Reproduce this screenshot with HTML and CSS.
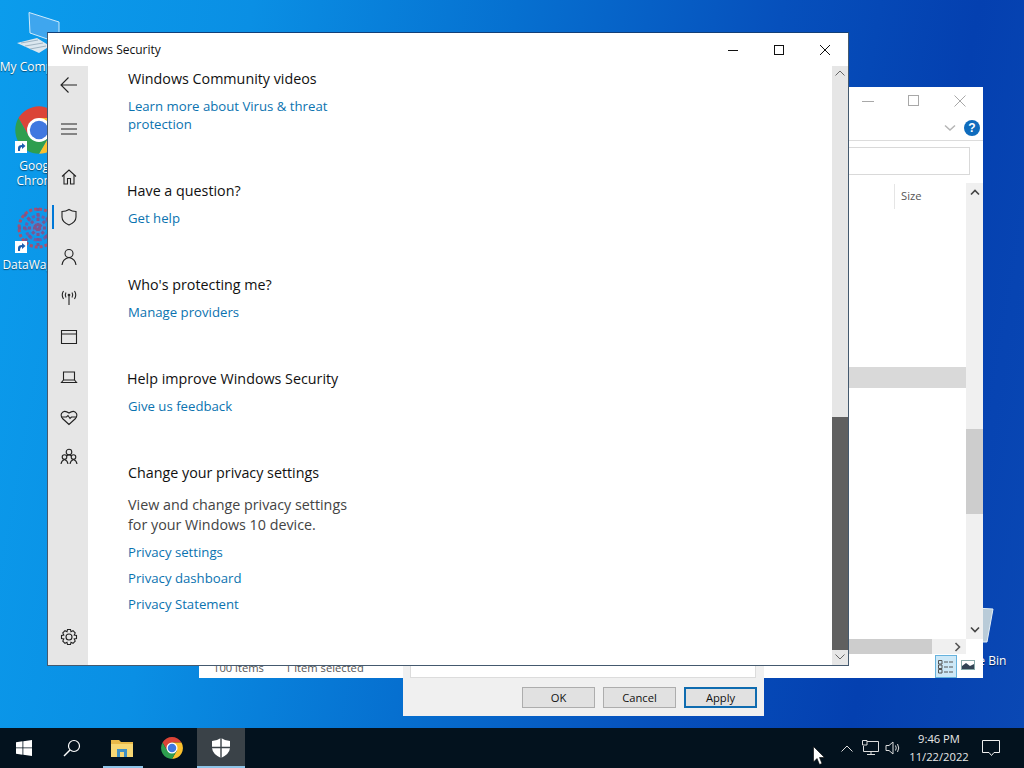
FILE: index.html
```html
<!DOCTYPE html>
<html>
<head>
  <title>Windows Security</title>
  <link rel="stylesheet" href="styles.css">
</head>
<body>
  <svg class="defs" width="0" height="0">
    <symbol id="chrome" viewBox="0 0 48 48">
      <path fill="#db4437" d="M5.05 13A22 22 0 0 1 42.95 13H24L14.5 29.5Z"/>
      <path fill="#fbc02d" d="M42.95 13A22 22 0 0 1 24 46L33.5 29.5 24 13Z"/>
      <path fill="#2e9e4f" d="M24 46A22 22 0 0 1 5.05 13L14.5 29.5H33.5Z"/>
      <circle cx="24" cy="24" r="11" fill="#fff"/>
      <circle cx="24" cy="24" r="8.5" fill="#3f78e0"/>
    </symbol>
    <symbol id="shortcut" viewBox="0 0 12 12">
      <rect width="12" height="12" fill="#fff"/>
      <path d="M3 10V7Q3 4 7 4V2L10.500 5 7 8V6Q5 6 5 10Z" fill="#1b5fb0"/>
    </symbol>
  </svg>

  <div class="desktop">
    <div class="desk-icon icon-pc">
      <svg class="desk-art" width="48" height="42" viewBox="0 0 48 42">
        <path d="M15 .5L45 10V31L16 21Z" fill="#3fa6ee" stroke="#cfeafb"/>
        <path d="M3 31L23 26 36 34 25 41Z" fill="#dbe7ef"/>
        <path d="M7 31L24 28M11 34L29 31M16 37L32 34" stroke="#9fb4c2"/>
      </svg>
      <span>My Computer</span>
    </div>
    <div class="desk-icon icon-chrome">
      <svg class="desk-art" width="52" height="52"><use href="#chrome"/></svg>
      <svg class="badge" width="12" height="12"><use href="#shortcut"/></svg>
      <span>Google Chrome</span>
    </div>
    <div class="desk-icon icon-data">
      <svg class="desk-art" width="48" height="46" viewBox="0 0 48 46">
        <circle cx="24" cy="23" r="8" fill="#2f8fe0"/>
        <g fill="none" stroke="#a8506e" stroke-width="3" stroke-dasharray="3 2">
          <circle cx="24" cy="23" r="19"/>
          <circle cx="24" cy="23" r="12" stroke="#6a5fa8"/>
          <path d="M4 23H44M24 3V43M10 9L38 37M38 9L10 37" stroke="#7b5590"/>
        </g>
      </svg>
      <svg class="badge" width="12" height="12"><use href="#shortcut"/></svg>
      <span>DataWagon</span>
    </div>
    <div class="desk-icon icon-bin">
      <svg class="desk-art" width="48" height="40" viewBox="0 0 48 40">
        <path d="M6 2L42 4 36 37H14Z" fill="#b9cbd8" stroke="#e6f0f6"/>
      </svg>
      <span>Recycle Bin</span>
    </div>

    <!-- explorer behind everything -->
    <div class="explorer">
      <div class="exp-title">
        <svg width="12" height="12" viewBox="0 0 12 12"><path d="M0 6.500H12" stroke="#a8a8a8"/></svg>
        <svg width="12" height="12" viewBox="0 0 12 12"><rect x=".5" y=".5" width="10" height="10" fill="none" stroke="#a8a8a8"/></svg>
        <svg width="12" height="12" viewBox="0 0 12 12"><path d="M.5 .5L11.500 11.500M11.500 .5L.5 11.500" stroke="#a8a8a8"/></svg>
      </div>
      <div class="exp-ribbon">
        <svg width="12" height="8" viewBox="0 0 12 8"><path d="M1 1.500L6 6 11 1.500" fill="none" stroke="#b5b5b5" stroke-width="1.500"/></svg>
        <span class="help">?</span>
      </div>
      <div class="exp-address"><div class="address-box"></div></div>
      <div class="exp-body">
        <div class="exp-list">
          <div class="col-head"><span class="col-size">Size</span></div>
          <div class="row-selected"></div>
        </div>
        <div class="exp-vscroll">
          <svg width="10" height="7" viewBox="0 0 10 7"><path d="M1 5.500L5 1.500 9 5.500" fill="none" stroke="#444" stroke-width="1.600"/></svg>
          <div class="exp-vthumb"></div>
          <svg width="10" height="7" viewBox="0 0 10 7"><path d="M1 1.500L5 5.500 9 1.500" fill="none" stroke="#444" stroke-width="1.600"/></svg>
        </div>
      </div>
      <div class="exp-hscroll">
        <div class="exp-hthumb"></div>
        <svg width="7" height="10" viewBox="0 0 7 10"><path d="M1.500 1L5.500 5 1.500 9" fill="none" stroke="#555" stroke-width="1.600"/></svg>
      </div>
      <div class="exp-status">
        <span class="status-text">100 items</span>
        <span class="status-text">1 item selected</span>
        <span class="view-btn">
          <svg width="16" height="14" viewBox="0 0 16 14"><path d="M.5 .5H4V4H.5ZM.5 5H4V8.500H.5ZM.5 9.500H4V13H.5ZM6 2H10M11 2H15M6 7H10M11 7H15M6 12H10M11 12H15" fill="none" stroke="#555"/></svg>
        </span>
        <span class="view-large">
          <svg width="14" height="10" viewBox="0 0 14 10"><rect x=".5" y=".5" width="13" height="9" fill="#fff" stroke="#8aa"/><path d="M1 6L5 3 9 6 13 4V9H1Z" fill="#345"/></svg>
        </span>
      </div>
    </div>

    <div class="dialog">
      <div class="dialog-box"></div>
      <div class="dialog-buttons">
        <button class="btn">OK</button>
        <button class="btn">Cancel</button>
        <button class="btn btn-default">Apply</button>
      </div>
    </div>

    <!-- Windows Security -->
    <div class="security">
      <div class="sec-title">
        <span class="sec-name">Windows Security</span>
        <div class="sec-controls">
          <svg width="12" height="12" viewBox="0 0 12 12"><path d="M1 6.500H11" stroke="#111"/></svg>
          <svg width="12" height="12" viewBox="0 0 12 12"><rect x="1.500" y="1.500" width="9" height="9" fill="none" stroke="#111"/></svg>
          <svg width="12" height="12" viewBox="0 0 12 12"><path d="M1 1L11 11M11 1L1 11" stroke="#111"/></svg>
        </div>
      </div>
      <div class="sec-main">
        <nav class="sidebar">
          <div class="nav-top nav-back">
            <svg width="20" height="20" viewBox="0 0 20 20"><path d="M18 10H2M9.500 2.500L2 10l7.500 7.500" class="ic"/></svg>
          </div>
          <div class="nav-top nav-menu">
            <svg width="18" height="14" viewBox="0 0 18 14"><path d="M1 2H17M1 7H17M1 12H17" class="ic"/></svg>
          </div>
          <div class="nav-item">
            <svg width="18" height="18" viewBox="0 0 18 18"><path d="M2 8.500L9 2l7 6.500M4 7V16H7.500V10.500H10.500V16H14V7" class="ic"/></svg>
          </div>
          <div class="nav-item nav-active">
            <svg width="18" height="18" viewBox="0 0 18 18"><path d="M9 1.500Q12 3.500 16 3.500V9Q16 14 9 17 2 14 2 9V3.500Q6 3.500 9 1.500Z" class="ic"/></svg>
          </div>
          <div class="nav-item">
            <svg width="18" height="18" viewBox="0 0 18 18"><circle cx="9" cy="5.500" r="4" class="ic"/><path d="M2 17Q2.500 11 9 9.500 15.500 11 16 17" class="ic"/></svg>
          </div>
          <div class="nav-item">
            <svg width="18" height="18" viewBox="0 0 18 18"><path d="M9 8V17M6 4.500Q4.500 7 6 9.500M12 4.500Q13.500 7 12 9.500M3.500 3Q1 7 3.500 11M14.500 3Q17 7 14.500 11" class="ic"/><circle cx="9" cy="7" r=".8" class="ic"/></svg>
          </div>
          <div class="nav-item">
            <svg width="18" height="18" viewBox="0 0 18 18"><path d="M1.500 2.500H16.500V15.500H1.500ZM1.500 6H16.500" class="ic"/></svg>
          </div>
          <div class="nav-item">
            <svg width="18" height="18" viewBox="0 0 18 18"><path d="M3.500 4H14.500V12H3.500ZM1.500 14.500H16.500L14.500 12H3.500Z" class="ic"/></svg>
          </div>
          <div class="nav-item">
            <svg width="18" height="18" viewBox="0 0 18 18"><path d="M9 16.500L2.500 10.500Q.5 8 1.500 5.500 4 1.500 9 5 14 1.500 16.500 5.500 17.500 8 15.500 10.500Z" class="ic"/><path d="M1.500 9H6.500L8 7.500 10 10.500 11.500 9H16.500" class="ic"/></svg>
          </div>
          <div class="nav-item">
            <svg width="18" height="18" viewBox="0 0 18 18"><circle cx="9" cy="4" r="2.800" class="ic"/><circle cx="4.500" cy="9" r="2.300" class="ic"/><circle cx="13.500" cy="9" r="2.300" class="ic"/><path d="M1 16Q1.500 12.500 4.500 11.500 7.500 12.500 8 16M10 16Q10.500 12.500 13.500 11.500 16.500 12.500 17 16M6.500 8Q9 6 11.500 8" class="ic"/></svg>
          </div>
          <div class="nav-item nav-settings">
            <svg width="18" height="18" viewBox="0 0 18 18"><circle cx="9" cy="9" r="3" class="ic"/><path d="M7.500 1.500H10.500L11 3.700 13 2.700 15.200 4.900 14.200 7 16.500 7.500V10.500L14.200 11 15.200 13.100 13 15.300 11 14.300 10.500 16.500H7.500L7 14.300 5 15.300 2.800 13.100 3.800 11 1.500 10.500V7.500L3.800 7 2.800 4.900 5 2.700 7 3.700Z" class="ic"/></svg>
          </div>
        </nav>

        <div class="content">
          <section class="block">
            <h2>Windows Community videos</h2>
            <a class="link">Learn more about Virus &amp; threat<br>protection</a>
          </section>
          <section class="block">
            <h2 class="out">Have a question?</h2>
            <a class="link">Get help</a>
          </section>
          <section class="block">
            <h2>Who's protecting me?</h2>
            <a class="link">Manage providers</a>
          </section>
          <section class="block">
            <h2 class="out">Help improve Windows Security</h2>
            <a class="link">Give us feedback</a>
          </section>
          <section class="block">
            <h2>Change your privacy settings</h2>
            <p>View and change privacy settings<br>for your Windows 10 device.</p>
            <a class="link">Privacy settings</a>
            <a class="link">Privacy dashboard</a>
            <a class="link">Privacy Statement</a>
          </section>
        </div>

        <div class="sec-scroll">
          <svg class="sec-arrow" width="10" height="6" viewBox="0 0 10 6"><path d="M.5 5.500L5 1 9.500 5.500" fill="none" stroke="#666"/></svg>
          <div class="sec-thumb"></div>
          <svg class="sec-arrow" width="10" height="6" viewBox="0 0 10 6"><path d="M.5 .5L5 5 9.500 .5" fill="none" stroke="#666"/></svg>
        </div>
      </div>
    </div>
  </div>

  <footer class="taskbar">
    <div class="task-cell">
      <svg width="16" height="16" viewBox="0 0 16 16"><path fill="#fff" d="M0 2.300L6.500 1.300V7.500H0ZM7.300 1.200L16 0V7.500H7.300ZM0 8.300H6.500V14.700L0 13.700ZM7.300 8.300H16V16L7.300 14.800Z"/></svg>
    </div>
    <div class="task-cell">
      <svg width="18" height="18" viewBox="0 0 18 18"><circle cx="11" cy="7" r="5.500" fill="none" stroke="#fff" stroke-width="1.200"/><path d="M7 11L1 17" stroke="#fff" stroke-width="1.400"/></svg>
    </div>
    <div class="task-cell task-open">
      <svg width="22" height="18" viewBox="0 0 22 18"><path d="M0 1H8L10 3H22V6H0Z" fill="#e9b949"/><path d="M0 5H22V18H0Z" fill="#f7d774"/><path d="M6 18V10H16V18H13V13H9V18Z" fill="#3f8fc4"/></svg>
    </div>
    <div class="task-cell task-chrome">
      <svg width="24" height="24"><use href="#chrome"/></svg>
    </div>
    <div class="task-cell task-active">
      <svg width="18" height="20" viewBox="0 0 18 20"><path fill="#fff" d="M9 0Q12.500 2.500 18 3V10Q17.500 16 9 20 .5 16 0 10V3Q5.500 2.500 9 0Z"/><path d="M9 0V20M0 9.500H18" stroke="#3a4248" stroke-width="1.400"/></svg>
    </div>
    <div class="tray">
      <svg class="tray-chevron" width="12" height="7" viewBox="0 0 12 7"><path d="M.5 6.500L6 1l5.500 5.500" fill="none" stroke="#ddd"/></svg>
      <svg class="tray-network" width="17" height="16" viewBox="0 0 17 16"><path d="M5 1.500H16.500V11.500H1.500V6M9 11.500V14.500M5 14.500H13M.5 .5H5V5H.5Z" fill="none" stroke="#ddd"/></svg>
      <svg class="tray-sound" width="16" height="14" viewBox="0 0 16 14"><path d="M1 4.500H4L8 1V13L4 9.500H1ZM10.500 4.500Q12 7 10.500 9.500M12.500 3Q15 7 12.500 11" fill="none" stroke="#ddd"/></svg>
      <div class="clock"><span>9:46 PM</span><span>11/22/2022</span></div>
      <svg class="notify" width="18" height="17" viewBox="0 0 18 17"><path d="M.5 .5H17.500V12.500H12L9.500 15.500 7 12.500H.5Z" fill="none" stroke="#eee"/></svg>
    </div>
  </footer>

  <svg class="cursor" width="13" height="19" viewBox="0 0 13 19"><path d="M.5 .5V16L4 12.500 6.500 18.500 9 17.500 6.500 11.500H11.500Z" fill="#fff" stroke="#000" stroke-width=".6"/></svg>
</body>
</html>
```

FILE: styles.css
```css
* {
  box-sizing: border-box;
}

html, body {
  margin: 0;
  height: 100%;
  overflow: hidden;
}

body {
  width: 1024px;
  height: 768px;
  position: relative;
  display: flex;
  flex-direction: column;
  font-family: "Open Sans", "Liberation Sans", sans-serif;
  background: #02101c;
}

.defs {
  position: absolute;
}

.desktop {
  position: relative;
  height: 728px;
  overflow: hidden;
  background:
    linear-gradient(100deg, #0b9cec 0%, #0a8fe4 22%, #0670d0 45%, #0650bc 68%, #0440b0 85%, #0a48b4 100%);
}

/* desktop icons */
.desk-icon {
  position: absolute;
  width: 76px;
  left: 0;
  display: flex;
  flex-direction: column;
  align-items: center;
  color: #fff;
  font-size: 12px;
  line-height: 15px;
  text-align: center;
  text-shadow: 0 1px 1px rgba(0, 0, 0, 0.5);
}

.icon-pc span,
.icon-data span,
.icon-bin span {
  white-space: nowrap;
}

.desk-art {
  flex: none;
}

.badge {
  position: absolute;
  left: 15px;
  bottom: 0;
}

.icon-pc {
  top: 12px;
}

.icon-pc span {
  margin-top: 5px;
}

.icon-chrome {
  top: 104px;
  left: 1px;
}

.icon-chrome .badge {
  top: 37px;
  left: 14px;
}

.icon-chrome span {
  margin-top: 2px;
  padding: 0 8px;
}

.icon-data {
  top: 205px;
  left: -3px;
}

.icon-data .desk-art {
  margin-left: 6px;
}

.icon-data .badge {
  top: 36px;
  left: 18px;
}

.icon-data span {
  margin-top: 6px;
}

.icon-bin {
  left: 937px;
  top: 605px;
}

.icon-bin span {
  margin-top: 8px;
}

/* explorer window */
.explorer {
  position: absolute;
  left: 199px;
  top: 87px;
  width: 784px;
  height: 591px;
  background: #fff;
  display: flex;
  flex-direction: column;
  color: #555;
  font-size: 11.2px;
}

.exp-title {
  height: 28px;
  display: flex;
  justify-content: flex-end;
  align-items: center;
  gap: 34px;
  padding-right: 17px;
}

.exp-ribbon {
  height: 26px;
  display: flex;
  justify-content: flex-end;
  align-items: center;
  gap: 8px;
  padding-right: 3px;
  border-bottom: 1px solid #dcdcdc;
}

.help {
  width: 16px;
  height: 16px;
  border-radius: 50%;
  background: #0f6cbd;
  color: #fff;
  font: bold 12px/16px "Liberation Sans", sans-serif;
  text-align: center;
}

.exp-address {
  height: 42px;
  padding: 6px 13px 8px 0;
}

.address-box {
  height: 28px;
  border: 1px solid #d9d9d9;
}

.exp-body {
  flex: 1;
  display: flex;
  min-height: 0;
}

.exp-list {
  flex: 1;
}

.col-head {
  height: 25px;
  margin-top: 1px;
  display: flex;
  justify-content: flex-end;
}

.col-size {
  width: 72px;
  padding-left: 6px;
  line-height: 24px;
  border-left: 1px solid #e5e5e5;
}

.row-selected {
  height: 21px;
  margin-top: 158px;
  background: #d9d9d9;
}

.exp-vscroll {
  width: 17px;
  background: #f0f0f0;
  display: flex;
  flex-direction: column;
  align-items: center;
  padding: 6px 0;
}

.exp-vthumb {
  width: 100%;
  height: 85px;
  margin-top: 233px;
  margin-bottom: auto;
  background: #cdcdcd;
}

.exp-hscroll {
  height: 15px;
  flex: none;
  margin-right: 17px;
  background: #f0f0f0;
  display: flex;
  align-items: center;
  justify-content: space-between;
  padding-right: 5px;
}

.exp-hthumb {
  width: 733px;
  height: 100%;
  background: #cdcdcd;
}

.exp-status {
  height: 24px;
  flex: none;
  display: flex;
  align-items: flex-end;
  padding-left: 14px;
}

.status-text {
  line-height: 17px;
  margin-right: 21px;
  margin-bottom: 2px;
}

.view-btn {
  margin-left: auto;
  width: 22px;
  height: 23px;
  display: flex;
  align-items: center;
  justify-content: center;
  background: #cde8f7;
  border: 1px solid #66b2dd;
}

.view-large {
  display: flex;
  margin: 0 8px 8px 4px;
}

/* dialog */
.dialog {
  position: absolute;
  left: 403px;
  top: 400px;
  width: 361px;
  height: 316px;
  background: #f0f0f0;
  padding: 0 8px 8px 7px;
  display: flex;
  flex-direction: column;
}

.dialog-box {
  height: 278px;
  background: #fff;
  border: 1px solid #dcdcdc;
}

.dialog-buttons {
  display: flex;
  justify-content: flex-end;
  gap: 8px;
  margin-top: 9px;
  margin-right: -1px;
}

.btn {
  width: 73px;
  height: 21px;
  padding: 0;
  background: #e1e1e1;
  border: 1px solid #adadad;
  color: #111;
  font-family: inherit;
  font-size: 11.2px;
}

.btn-default {
  border: 2px solid #0f6cb0;
}

/* security window */
.security {
  position: absolute;
  left: 47px;
  top: 32px;
  width: 802px;
  height: 634px;
  background: #fff;
  border: 1px solid #44596e;
  border-top-color: #123f78;
  display: flex;
  flex-direction: column;
}

.sec-title {
  height: 33px;
  flex: none;
  display: flex;
  align-items: center;
  justify-content: space-between;
  padding-left: 14px;
}

.sec-name {
  font-size: 12px;
  color: #111;
}

.sec-controls {
  display: flex;
  gap: 34px;
  padding-right: 17px;
}

.sec-main {
  flex: 1;
  display: flex;
  min-height: 0;
}

.sidebar {
  width: 40px;
  flex: none;
  padding-left: 1px;
  background: #e6e6e6;
  display: flex;
  flex-direction: column;
}

.nav-top,
.nav-item {
  height: 40px;
  flex: none;
  position: relative;
  display: flex;
  align-items: center;
  justify-content: center;
}

.nav-top.nav-back {
  height: 38px;
}

.nav-menu {
  margin: 5px 0 8px;
}

.nav-active::before {
  content: "";
  position: absolute;
  left: 3px;
  top: 8px;
  width: 2px;
  height: 24px;
  background: #0078d7;
}

.nav-settings {
  margin-top: auto;
  margin-bottom: 8px;
}

.ic {
  fill: none;
  stroke: #222;
  stroke-width: 1.100;
}

.content {
  flex: 1;
  padding: 3px 0 0 40px;
}

.block {
  display: flex;
  flex-direction: column;
  align-items: flex-start;
  margin-bottom: 48px;
}

.block h2 {
  margin: 0 0 8px;
  font-size: 14.3px;
  font-weight: 400;
  line-height: 20px;
  color: #111;
}

.block h2.out {
  margin-left: -1px;
}

.block p {
  margin: 4px 0 8px;
  font-size: 14.3px;
  line-height: 20px;
  color: #444;
}

.link {
  font-size: 13.2px;
  line-height: 18px;
  color: #0b73b0;
  margin-bottom: 8px;
}

.block .link:last-child {
  margin-bottom: 0;
}

.sec-scroll {
  width: 16px;
  flex: none;
  background: #e6e6e6;
  display: flex;
  flex-direction: column;
  align-items: center;
}

.sec-arrow {
  flex: none;
  margin: 4px 0 5px;
}

.sec-thumb {
  width: 100%;
  height: 233px;
  margin-top: auto;
  background: #606060;
}

/* taskbar */
.taskbar {
  height: 40px;
  flex: none;
  display: flex;
  background: #03121e;
  color: #e8e8e8;
}

.task-cell {
  width: 48px;
  display: flex;
  align-items: center;
  justify-content: center;
  position: relative;
}

.task-open {
  width: 52px;
}

.task-chrome {
  width: 49px;
  padding-right: 1px;
}

.task-open::after,
.task-active::after {
  content: "";
  position: absolute;
  left: 7px;
  right: 5px;
  bottom: 0;
  height: 2px;
  background: #8ec4e8;
}

.task-active {
  background: #3a4248;
}

.task-active::after {
  left: 0;
  right: 0;
}

.tray {
  flex: 1;
  display: flex;
  align-items: center;
  justify-content: flex-end;
}

.tray-chevron {
  margin-right: 9px;
}

.tray-network {
  margin-right: 6px;
}

.tray-sound {
  margin-right: 1px;
}

.clock {
  width: 74px;
  display: flex;
  flex-direction: column;
  align-items: center;
  margin-right: 6px;
  font-size: 11.2px;
  line-height: 18px;
}

.notify {
  margin-right: 24px;
}

.cursor {
  position: absolute;
  left: 813px;
  top: 746px;
}
```
